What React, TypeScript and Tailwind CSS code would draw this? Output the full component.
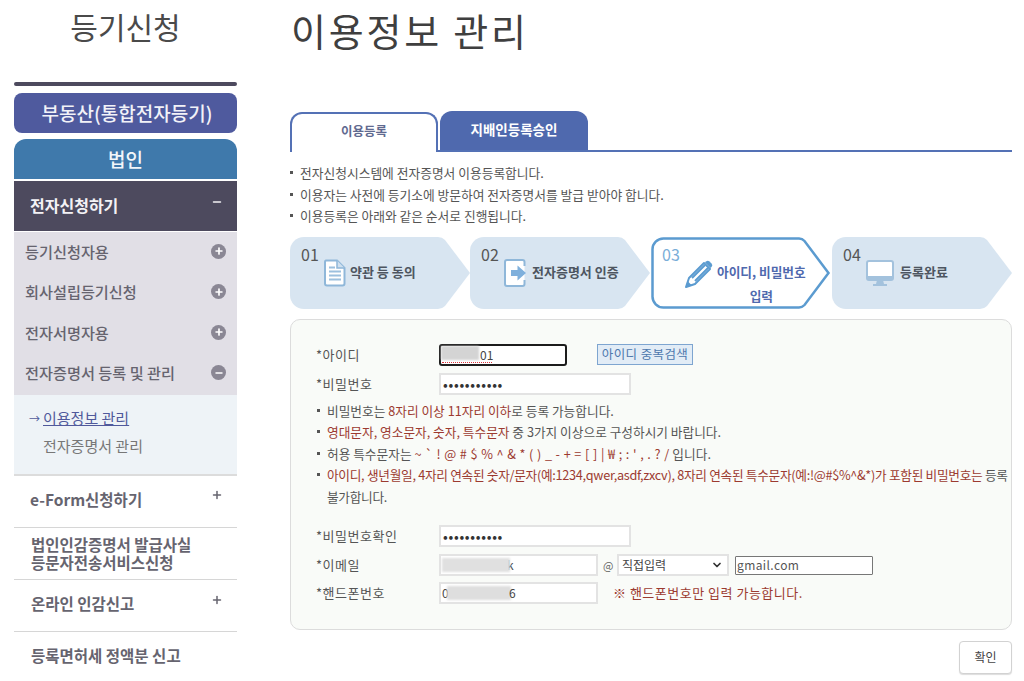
import { Plus, Minus, ChevronDown } from 'lucide-react';

const font = "font-['Noto_Sans_CJK_KR','Noto_Sans',sans-serif]";

function CircleIcon({ open }: { open?: boolean }) {
  return (
    <span className="flex h-[15px] w-[15px] items-center justify-center rounded-full bg-[#8a8794]">
      {open ? (
        <Minus className="h-[10px] w-[10px] text-white" strokeWidth={4} />
      ) : (
        <Plus className="h-[10px] w-[10px] text-white" strokeWidth={4} />
      )}
    </span>
  );
}

function Sidebar() {
  const subs = ['등기신청자용', '회사설립등기신청', '전자서명자용'];
  return (
    <aside className="ml-[14px] w-[223px] shrink-0">
      <h2 className="flex h-[82px] justify-center pt-[4px] text-[30px] leading-[44px] text-[#4a4a4a]">등기신청</h2>
      <div className="h-[4px] rounded-full bg-[#4d4a5e]" />
      <div className="mt-[7px] flex h-[40px] items-center justify-center rounded-[8px] bg-[#4f5a9e] pl-[3px] text-[19px] font-medium text-[#f2f2f8]">
        부동산(통합전자등기)
      </div>
      <div className="mt-[6px] flex h-[40px] items-center justify-center rounded-t-[12px] bg-[#3f79ab] text-[19px] font-medium text-[#f2f6fa]">
        법인
      </div>
      <div className="mt-[2px] flex h-[50px] items-center justify-between bg-[#4d4a5e] pb-[2px] pl-[16px] pr-[14px] text-[16px] font-bold text-[#f3f2f5]">
        <span>전자신청하기</span>
        <Minus className="mb-[6px] h-[12px] w-[12px]" strokeWidth={3} />
      </div>
      <div className="mt-px bg-[#e1dfe6] pb-[1px]">
        {subs.map((s) => (
          <div key={s} className="flex h-[40.5px] items-center justify-between pb-[2px] pl-[11px] pr-[11px] text-[15.2px] font-medium text-[#66646f]">
            <span>{s}</span>
            <CircleIcon />
          </div>
        ))}
        <div className="flex h-[40px] items-center justify-between pb-[2px] pl-[11px] pr-[11px] text-[15.2px] font-medium text-[#66646f]">
          <span>전자증명서 등록 및 관리</span>
          <CircleIcon open />
        </div>
      </div>
      <div className="h-[81px] border-b-2 border-[#dcdcdc] bg-[#eef3f7] pt-[9px] text-[15px] leading-[28px]">
        <div className="flex items-center text-[#50599b]">
          <span className="ml-[15px] w-[14px] text-[11px]">→</span>
          <span className="underline">이용정보 관리</span>
        </div>
        <div className="pl-[29px] text-[#777]">전자증명서 관리</div>
      </div>
      <div className="flex h-[52px] justify-between border-b border-[#d6d6d6] pl-[16px] pr-[14px] pt-[12px] text-[15.5px] font-bold text-[#66646f]">
        <span>e-Form신청하기</span>
        <Plus className="mt-[1px] h-[12px] w-[12px]" strokeWidth={3} />
      </div>
      <div className="flex h-[52px] items-center border-b border-[#d6d6d6] pl-[17px] text-[15.5px] font-bold leading-[18px] text-[#66646f]">
        <span>
          법인인감증명서 발급사실
          <br />
          등문자전송서비스신청
        </span>
      </div>
      <div className="flex h-[52px] justify-between border-b border-[#d6d6d6] pl-[17px] pr-[14px] pt-[12px] text-[15.5px] font-bold text-[#66646f]">
        <span>온라인 인감신고</span>
        <Plus className="mt-[2px] h-[12px] w-[12px]" strokeWidth={3} />
      </div>
      <div className="pl-[17px] pt-[12px] text-[15.5px] font-bold text-[#66646f]">등록면허세 정액분 신고</div>
    </aside>
  );
}

function DocIcon() {
  return (
    <svg width="22" height="28" viewBox="0 0 22 28" fill="none">
      <path d="M2 1.5h11l7.5 7.5v15.5a2 2 0 0 1-2 2H3a2 2 0 0 1-2-2V3a1.5 1.5 0 0 1 1-1.5z" fill="#fff" stroke="#8fb7d9" strokeWidth="2" />
      <path d="M13 1.5V9h7.5" fill="#cfe0ef" stroke="#8fb7d9" strokeWidth="1.5" />
      <path d="M5 8.5h6M5 12.5h12M5 16.5h12M5 20.5h12" stroke="#9cc0de" strokeWidth="1.8" />
    </svg>
  );
}

function ArrowIcon() {
  return (
    <svg width="22" height="28" viewBox="0 0 22 28" fill="none">
      <path d="M20.5 7V3a2 2 0 0 0-2-2H3a2 2 0 0 0-2 2v22a2 2 0 0 0 2 2h15.500a2 2 0 0 0 2-2v-4" fill="#fff" stroke="#8fb7d9" strokeWidth="2" />
      <path d="M7 11h6.500V6.500L22 14l-8.500 7.500V17H7z" fill="#7fb0dc" />
    </svg>
  );
}

function PencilIcon() {
  return (
    <svg width="29" height="29" viewBox="0 0 29 29" fill="none">
      <path d="M1 28l3-9L19 4l6 6L10 25z" fill="#fff" stroke="#5b9bd0" strokeWidth="2" strokeLinejoin="round" />
      <path d="M21 2.500a2.500 2.500 0 0 1 3.500 0l2 2a2.500 2.500 0 0 1 0 3.500L25.500 9 20 3.500z" fill="#5b9bd0" />
      <path d="M7 19L20 6M10 22L23 9" stroke="#5b9bd0" strokeWidth="2" />
      <path d="M1 28l1.500-6 4.500 4.500z" fill="#5b9bd0" />
    </svg>
  );
}

function MonitorIcon() {
  return (
    <svg width="28" height="28" viewBox="0 0 28 28" fill="none">
      <rect x="1" y="2" width="26" height="19" rx="2" fill="#fff" stroke="#a3c2dd" strokeWidth="2" />
      <path d="M1 17h26v2a2 2 0 0 1-2 2H3a2 2 0 0 1-2-2z" fill="#a3c2dd" />
      <path d="M11 21h6l1 4h-8z" fill="#a3c2dd" />
      <rect x="7" y="25" width="14" height="2" fill="#a3c2dd" />
    </svg>
  );
}

function Step({ no, active, icon, label }: { no: string; active?: boolean; icon: React.ReactNode; label: React.ReactNode }) {
  return (
    <div className="relative h-[72px] w-[180px] shrink-0">
      <svg className="absolute inset-0" width="180" height="72" viewBox="0 0 180 72">
        {active ? (
          <path d="M13 1.500h135a8 8 0 0 1 5.500 2.500L177.500 36 153.500 68a8 8 0 0 1-5.500 2.500H13A11 11 0 0 1 1.500 59V13A11 11 0 0 1 13 1.500z" fill="#fff" stroke="#5b9bd0" strokeWidth="2.500" />
        ) : (
          <path d="M14 0h134a10 10 0 0 1 7 3L180 36 155 69a10 10 0 0 1-7 3H14A14 14 0 0 1 0 58V14A14 14 0 0 1 14 0z" fill="#d8e5f1" />
        )}
      </svg>
      <div className={`absolute left-[11px] top-[6px] text-[16px] leading-[22px] ${active ? 'text-[#7aaed8]' : 'text-[#555]'}`}>{no}</div>
      <div className="absolute left-[34px] top-[22px]">{icon}</div>
      {label}
    </div>
  );
}

function StepLabel({ text, left }: { text: string; left: string }) {
  return <div className={`absolute top-[24px] whitespace-nowrap text-[13px] font-bold leading-[22px] text-[#4d5560] ${left}`}>{text}</div>;
}

function Field({ label, children }: { label: string; children: React.ReactNode }) {
  return (
    <div className="flex items-center">
      <span className="w-[122px] -translate-x-px text-[13px] tracking-[0.5px] text-[#555]">*{label}</span>
      {children}
    </div>
  );
}

function Bullet({ children, gap }: { children: React.ReactNode; gap: string }) {
  return (
    <div className="flex">
      <span className={`mt-[9px] h-[3px] w-[3px] shrink-0 bg-[#555] ${gap}`} />
      <div>{children}</div>
    </div>
  );
}

const inputBox = 'flex h-[22px] items-center border-2 border-[#e3e3e3] bg-white text-[12px] text-[#444]';
const red = 'text-[#9c3a30]';

function Dots() {
  return <span className="pl-[2px] text-[14px] leading-none tracking-[0.7px] text-[#333]">•••••••••••</span>;
}

export default function App() {
  return (
    <div className={`flex h-[681px] w-[1024px] overflow-hidden bg-white ${font}`}>
      <Sidebar />
      <main className="ml-[53px] w-[722px] shrink-0">
        <h1 className="ml-[1px] h-[112px] pt-[5px] text-[38px] leading-[50px] tracking-[2.800px] text-[#3f3f3f]">이용정보 관리</h1>

        <div className="flex h-[40px] items-end gap-[2px] border-b-2 border-[#5471b5]">
          <div className="-mb-[2px] flex h-[40px] w-[148px] items-center justify-center rounded-t-[12px] border-2 border-b-0 border-[#5471b5] bg-white pb-[4px] text-[12.5px] font-bold text-[#5f6a90]">
            이용등록
          </div>
          <div className="flex h-[39px] w-[148px] items-center justify-center rounded-t-[12px] bg-[#4f69ae] pb-[2px] text-[13.500px] font-bold text-white">
            지배인등록승인
          </div>
        </div>

        <div className="mt-[10px] text-[12.75px] leading-[21.500px] text-[#555]">
          <Bullet gap="mr-[7px]">전자신청시스템에 전자증명서 이용등록합니다.</Bullet>
          <Bullet gap="mr-[7px]">이용자는 사전에 등기소에 방문하여 전자증명서를 발급 받아야 합니다.</Bullet>
          <Bullet gap="mr-[7px]">이용등록은 아래와 같은 순서로 진행됩니다.</Bullet>
        </div>

        <div className="mt-[10px] flex">
          <Step no="01" icon={<DocIcon />} label={<StepLabel text="약관 등 동의" left="left-[60px]" />} />
          <Step no="02" icon={<ArrowIcon />} label={<StepLabel text="전자증명서 인증" left="left-[62px]" />} />
          <div className="ml-px">
            <Step
              no="03"
              active
              icon={<PencilIcon />}
              label={
                <div className="absolute left-[66px] top-[23px] text-center text-[12.7px] font-bold leading-[24px] text-[#4f69ae]">
                  <div className="whitespace-nowrap">아이디, 비밀번호</div>
                  <div>입력</div>
                </div>
              }
            />
          </div>
          <div className="ml-px">
            <Step no="04" icon={<MonitorIcon />} label={<StepLabel text="등록완료" left="left-[68px]" />} />
          </div>
        </div>

        <section className="mt-[10px] h-[311px] rounded-[10px] border border-[#dcdcdc] bg-[#f9fbf8] pl-[26px] pr-[3px] pt-[24px]">
          <Field label="아이디">
            <div className="relative flex h-[22px] w-[128px] items-center rounded-[3px] border-2 border-[#1c1c1c] bg-white pl-[39px] text-[12px] text-[#444]">
              <span className="absolute left-0 top-0 h-[14px] w-[38px] bg-[#d4d4d4] blur-[1px]" />
              01
              <span className="absolute bottom-[1px] left-[1px] w-[50px] border-b border-dotted border-[#d9363e]" />
            </div>
            <button className="ml-[30px] h-[21px] w-[96px] border border-[#7ea5d0] bg-[#e2ecf6] text-[12.5px] tracking-[0.4px] text-[#4e78ad]">아이디 중복검색</button>
          </Field>
          <div className="mt-[7px]">
            <Field label="비밀번호">
              <div className={`${inputBox} w-[192px]`}>
                <Dots />
              </div>
            </Field>
          </div>

          <div className="mt-[5px] text-[12.7px] leading-[21.500px] text-[#555]">
            <Bullet gap="mr-[7px]">비밀번호는 <span className={red}>8자리 이상 11자리 이하</span>로 등록 가능합니다.</Bullet>
            <Bullet gap="mr-[7px]"><span className={red}>영대문자, 영소문자, 숫자, 특수문자</span> 중 3가지 이상으로 구성하시기 바랍니다.</Bullet>
            <Bullet gap="mr-[7px]">허용 특수문자는 <span className={`${red} tracking-[0.4px]`}>~ ` ! @ # $ % ^ &amp; * ( ) _ - + = [ ] { } | ₩ ; : ' , . ? /</span> 입니다.</Bullet>
            <Bullet gap="mr-[7px]">
              <span className="tracking-[-0.3px]">
                <span className={red}>아이디, 생년월일, 4자리 연속된 숫자/문자(예:1234,qwer,asdf,zxcv), 8자리 연속된 특수문자(예:!@#$%^&amp;*)가 포함된 비밀번호는</span> 등록 불가합니다.
              </span>
            </Bullet>
          </div>

          <div className="mt-[18px]">
            <Field label="비밀번호확인">
              <div className={`${inputBox} w-[192px]`}>
                <Dots />
              </div>
            </Field>
          </div>
          <div className="mt-[7px]">
            <Field label="이메일">
              <div className={`${inputBox} relative w-[159px] pl-[66px]`}>
                <span className="absolute left-[1px] top-[2px] h-[14px] w-[68px] bg-[#e0e0e0] blur-[1px]" />
                k
              </div>
              <span className="ml-[5px] w-[14px] text-[11px] text-[#666]">@</span>
              <div className="flex h-[22px] w-[112px] items-center justify-between border-2 border-[#e3e3e3] bg-white pl-[3px] pr-[4px] text-[12px] text-[#444]">
                직접입력
                <ChevronDown className="h-[12px] w-[12px] text-[#333]" strokeWidth={3.5} />
              </div>
              <div className="ml-[6px] flex h-[19px] w-[138px] items-center rounded-[1px] border border-[#777] bg-white pl-[1px] text-[12px] tracking-[0.4px] text-[#555]">gmail.com</div>
            </Field>
          </div>
          <div className="mt-[6px]">
            <Field label="핸드폰번호">
              <div className={`${inputBox} relative w-[159px] pl-[1px]`}>
                0
                <span className="absolute left-[6px] top-[2px] h-[14px] w-[64px] bg-[#dedede] blur-[1px]" />
                <span className="absolute left-[68px]">6</span>
              </div>
              <span className={`ml-[15px] text-[13px] tracking-[0.5px] ${red}`}>※ 핸드폰번호만 입력 가능합니다.</span>
            </Field>
          </div>
        </section>

        <div className="mt-[11px] flex justify-end">
          <button className="h-[33px] w-[53px] rounded-[4px] border border-[#d2d2d2] bg-white text-[12px] text-[#444] shadow-[0_1px_1px_#ddd]">확인</button>
        </div>
      </main>
    </div>
  );
}
